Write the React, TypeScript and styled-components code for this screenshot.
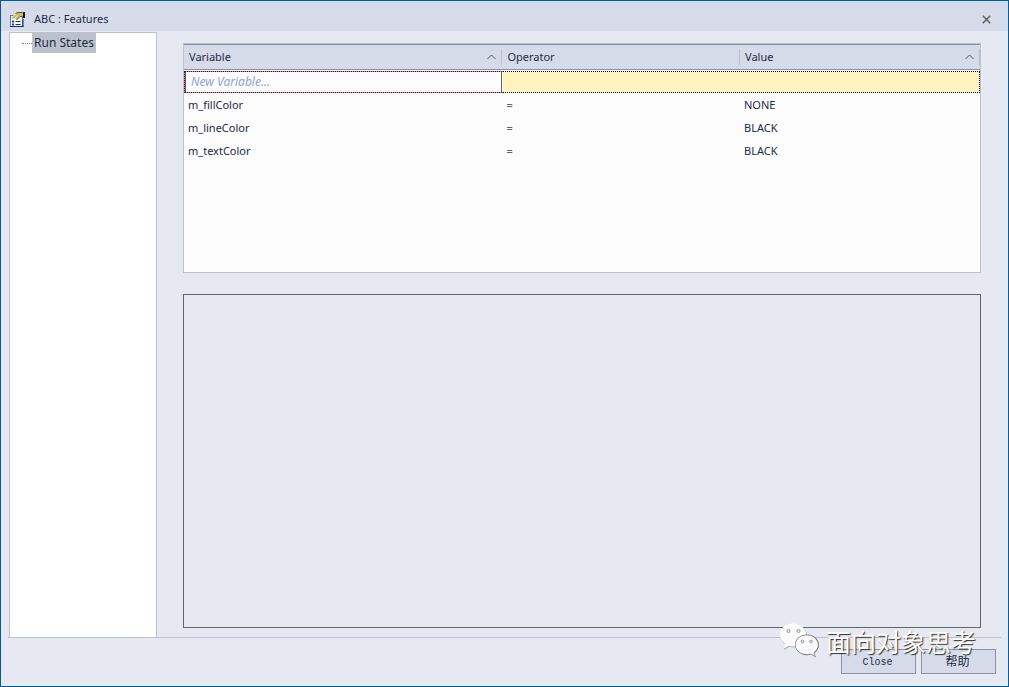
import React from "react";
import styled, { createGlobalStyle } from "styled-components";

const GlobalStyle = createGlobalStyle`
  *, *::before, *::after { box-sizing: border-box; }
  html, body, #root { height: 100%; margin: 0; }
  body {
    font-family: "Noto Sans", "Noto Sans CJK SC", sans-serif;
    font-size: 11px;
    line-height: 16px;
    color: #1e2a44;
  }
`;

const Dialog = styled.main`
  min-height: 100%;
  display: flex;
  flex-direction: column;
  border: 1px solid #005c9c;
  background: #e6e9f2;
`;

const TitleBar = styled.header`
  display: flex;
  align-items: center;
  gap: 8px;
  height: 30px;
  padding: 6px 15px 0 8px;
  background: #d6dbe9;
`;

const Title = styled.h1`
  flex: 1;
  margin: 0;
  font-size: 11px;
  font-weight: 400;
`;

const CloseIcon = styled.button`
  display: flex;
  padding: 2px;
  border: 0;
  background: none;
`;

const Body = styled.div`
  flex: 1;
  display: flex;
  gap: 26px;
  margin: 1px 7px 0;
  padding: 0 20px 0 1px;
  border-bottom: 1px solid #bcc1cd;
`;

const Tree = styled.nav`
  width: 148px;
  border: 1px solid #bcc1cd;
  border-bottom: 0;
  background: #fff;
`;

const TreeItem = styled.a`
  display: flex;
  align-items: center;
  height: 20px;
  padding-left: 12px;
  color: inherit;
  font-size: 12px;
  text-decoration: none;

  &::before {
    content: "";
    width: 10px;
    border-top: 1px dotted #808080;
  }
`;

const TreeLabel = styled.span`
  padding: 2px;
  background: #bcc2cc;
`;

const Content = styled.section`
  flex: 1;
  display: flex;
  flex-direction: column;
  gap: 21px;
  padding: 11px 0 9px;
`;

const GridFrame = styled.div`
  height: 230px;
  border: 1px solid #bcc1cd;
  background: #fcfcfc;
`;

const Grid = styled.table`
  width: 100%;
  table-layout: fixed;
  border-spacing: 0;
  text-align: left;
`;

const HeadCell = styled.th<{ $width: string }>`
  width: ${(p) => p.$width};
  height: 26px;
  padding: 4px 0;
  border-top: 1px solid #8591a2;
  border-bottom: 1px solid #8591a2;
  background: #d6dbe9;
  font-weight: 400;
`;

const HeadLabel = styled.div`
  display: flex;
  align-items: center;
  justify-content: space-between;
  padding: 0 5px;
  border-right: 1px solid #bcc1cd;
`;

const Cell = styled.td<{ $muted?: boolean }>`
  height: 23px;
  padding: 1px 4px 0;
  color: ${(p) => (p.$muted ? "#5a6070" : "inherit")};
`;

const EntryCell = styled.td`
  height: 23px;
  padding: 1px 0 0;
`;

const EntryInput = styled.input`
  display: block;
  width: 100%;
  height: 22px;
  padding: 0 6px 2px;
  border: 1px dotted #3c1428;
  border-right: 1px solid #606060;
  background: linear-gradient(#fcfcfc, #fcfcfc) padding-box, #c890a0 border-box;
  box-shadow: inset 1px 0 #7c4a58;
  color: inherit;
  font: inherit;
  font-size: 12px;

  &::placeholder {
    color: #8ca6d0;
    font-style: italic;
    opacity: 1;
  }
`;

const EntryFill = styled.div`
  height: 22px;
  border: 1px dotted #000;
  border-left: 1px solid #fcfcfc;
  background: #fff3c0;
`;

const Notes = styled.div`
  flex: 1;
  border: 1px solid #646464;
`;

const Footer = styled.footer`
  display: flex;
  justify-content: flex-end;
  gap: 5px;
  padding: 11px 12px 12px;
`;

const PushButton = styled.button<{ $mono?: boolean }>`
  width: 75px;
  height: 25px;
  padding: ${(p) => (p.$mono ? "1px 2px 0 0" : "0 2px 2px 0")};
  border: 1px solid #8793a8;
  background: #d6dbe9;
  color: #1e2a44;
  font-family: ${(p) =>
    p.$mono ? '"Liberation Mono", monospace' : '"Noto Sans CJK SC", sans-serif'};
  font-size: ${(p) => (p.$mono ? "10px" : "12px")};
`;

const Watermark = styled.div`
  position: absolute;
  right: 33px;
  bottom: 28px;
  display: flex;
  align-items: center;
  gap: 7px;
  color: #fff;
  font-family: "Noto Sans CJK SC", sans-serif;
  font-size: 25px;
  line-height: 36px;
  text-shadow: 1px 1px 1px #303030;
  pointer-events: none;
`;

const rows = [
  { name: "m_fillColor", value: "NONE" },
  { name: "m_lineColor", value: "BLACK" },
  { name: "m_textColor", value: "BLACK" },
];

const FeaturesIcon = () => (
  <svg width="17" height="17" viewBox="0 0 17 17" aria-hidden="true">
    <rect x="1.500" y="4.500" width="12" height="11" fill="#f4f8ff" stroke="#5474c4" />
    <path d="M1 15.500h13.500M14 8v8" stroke="#14286c" />
    <path d="M3 10.500h2M3 13.500h2" stroke="#1c3ca8" strokeWidth="2" />
    <path d="M6.500 10.500h5M6.500 13.500h5" stroke="#222c40" />
    <path d="M2 7l5-5 2-1 5 1v4l-3-.5-3.500 3-1.500-1.500-2 1z" fill="#c4bc64" />
    <path d="M3 6.500l4-4M5.500 7.500l3.500-3" stroke="#f6f2b8" />
    <path d="M7.500 9l3.500-3.500 3 .5M6.500 2.500l2-1h5" fill="none" stroke="#5c561c" />
    <path d="M14 1h2v6h-2z" fill="#151515" />
  </svg>
);

const SortArrow = () => (
  <svg width="9" height="6" viewBox="0 0 9 6" aria-hidden="true">
    <path d="M.5 5l4-4 4 4" fill="none" stroke="#505560" />
  </svg>
);

const ChatLogo = () => (
  <svg width="40" height="36" viewBox="0 0 40 36" aria-hidden="true">
    <g fill="#b0b0b4">
      <path d="M14.500 1.500C7 1.500 1.300 6.500 1.300 13c0 3.500 2 6.700 5 8.800l-1.600 5.500 6-3.500c1.400.4 2.800.6 4.300.6 7.500 0 13.200-5 13.200-11.400S22 1.500 14.500 1.500z" />
    </g>
    <path
      d="M14 .5C6.500.5 1 5.700 1 12c0 3.500 2 6.700 5 8.800l-1.600 5 5.500-3c1.400.4 2.800.6 4.300.6 7.500 0 13-5 13-11.400S21.500.5 14 .5z"
      fill="#fcfcfc"
    />
    <path
      d="M28 11.500c-6.700 0-12 4.600-12 10.300s5.300 10.400 12 10.400c1.400 0 2.800-.2 4-.6l5 3-1.600-4.400c2.800-2 4.500-5 4.500-8.400 0-5.700-5.300-10.300-11.900-10.300z"
      fill="#707070"
    />
    <path
      d="M27.800 12.300c-6.200 0-11.200 4.200-11.200 9.500s5 9.500 11.200 9.500c1.400 0 2.800-.2 4-.6l4 2.200-1.200-3.400c2.700-1.800 4.300-4.500 4.300-7.700 0-5.300-5-9.500-11.100-9.500z"
      fill="#fcfcfc"
    />
    <g fill="#dfe2ea" stroke="#808080" strokeWidth=".7">
      <circle cx="9.500" cy="8" r="1.600" />
      <circle cx="19.500" cy="8" r="1.600" />
      <circle cx="23.500" cy="18.500" r="1.400" />
      <circle cx="32" cy="18.500" r="1.400" />
    </g>
  </svg>
);

export default function App() {
  return (
    <>
      <GlobalStyle />
      <Dialog>
        <TitleBar>
          <FeaturesIcon />
          <Title>ABC : Features</Title>
          <CloseIcon aria-label="Close window">
            <svg width="9" height="9" viewBox="0 0 9 9" aria-hidden="true">
              <path d="M.8.8l7.400 7.400M8.200.8L.8 8.200" stroke="#606060" strokeWidth="1.500" />
            </svg>
          </CloseIcon>
        </TitleBar>
        <Body>
          <Tree>
            <TreeItem href="#run-states">
              <TreeLabel>Run States</TreeLabel>
            </TreeItem>
          </Tree>
          <Content id="run-states">
            <GridFrame>
              <Grid>
                <thead>
                  <tr>
                    <HeadCell $width="40%">
                      <HeadLabel>Variable<SortArrow /></HeadLabel>
                    </HeadCell>
                    <HeadCell $width="auto">
                      <HeadLabel>Operator</HeadLabel>
                    </HeadCell>
                    <HeadCell $width="240px">
                      <HeadLabel>Value<SortArrow /></HeadLabel>
                    </HeadCell>
                  </tr>
                </thead>
                <tbody>
                  <tr>
                    <EntryCell>
                      <EntryInput aria-label="Variable" placeholder="New Variable..." />
                    </EntryCell>
                    <EntryCell colSpan={2}>
                      <EntryFill />
                    </EntryCell>
                  </tr>
                  {rows.map((row) => (
                    <tr key={row.name}>
                      <Cell>{row.name}</Cell>
                      <Cell $muted>=</Cell>
                      <Cell>{row.value}</Cell>
                    </tr>
                  ))}
                </tbody>
              </Grid>
            </GridFrame>
            <Notes />
          </Content>
        </Body>
        <Footer>
          <PushButton $mono>Close</PushButton>
          <PushButton lang="zh">帮助</PushButton>
        </Footer>
        <Watermark lang="zh">
          <ChatLogo />
          面向对象思考
        </Watermark>
      </Dialog>
    </>
  );
}
